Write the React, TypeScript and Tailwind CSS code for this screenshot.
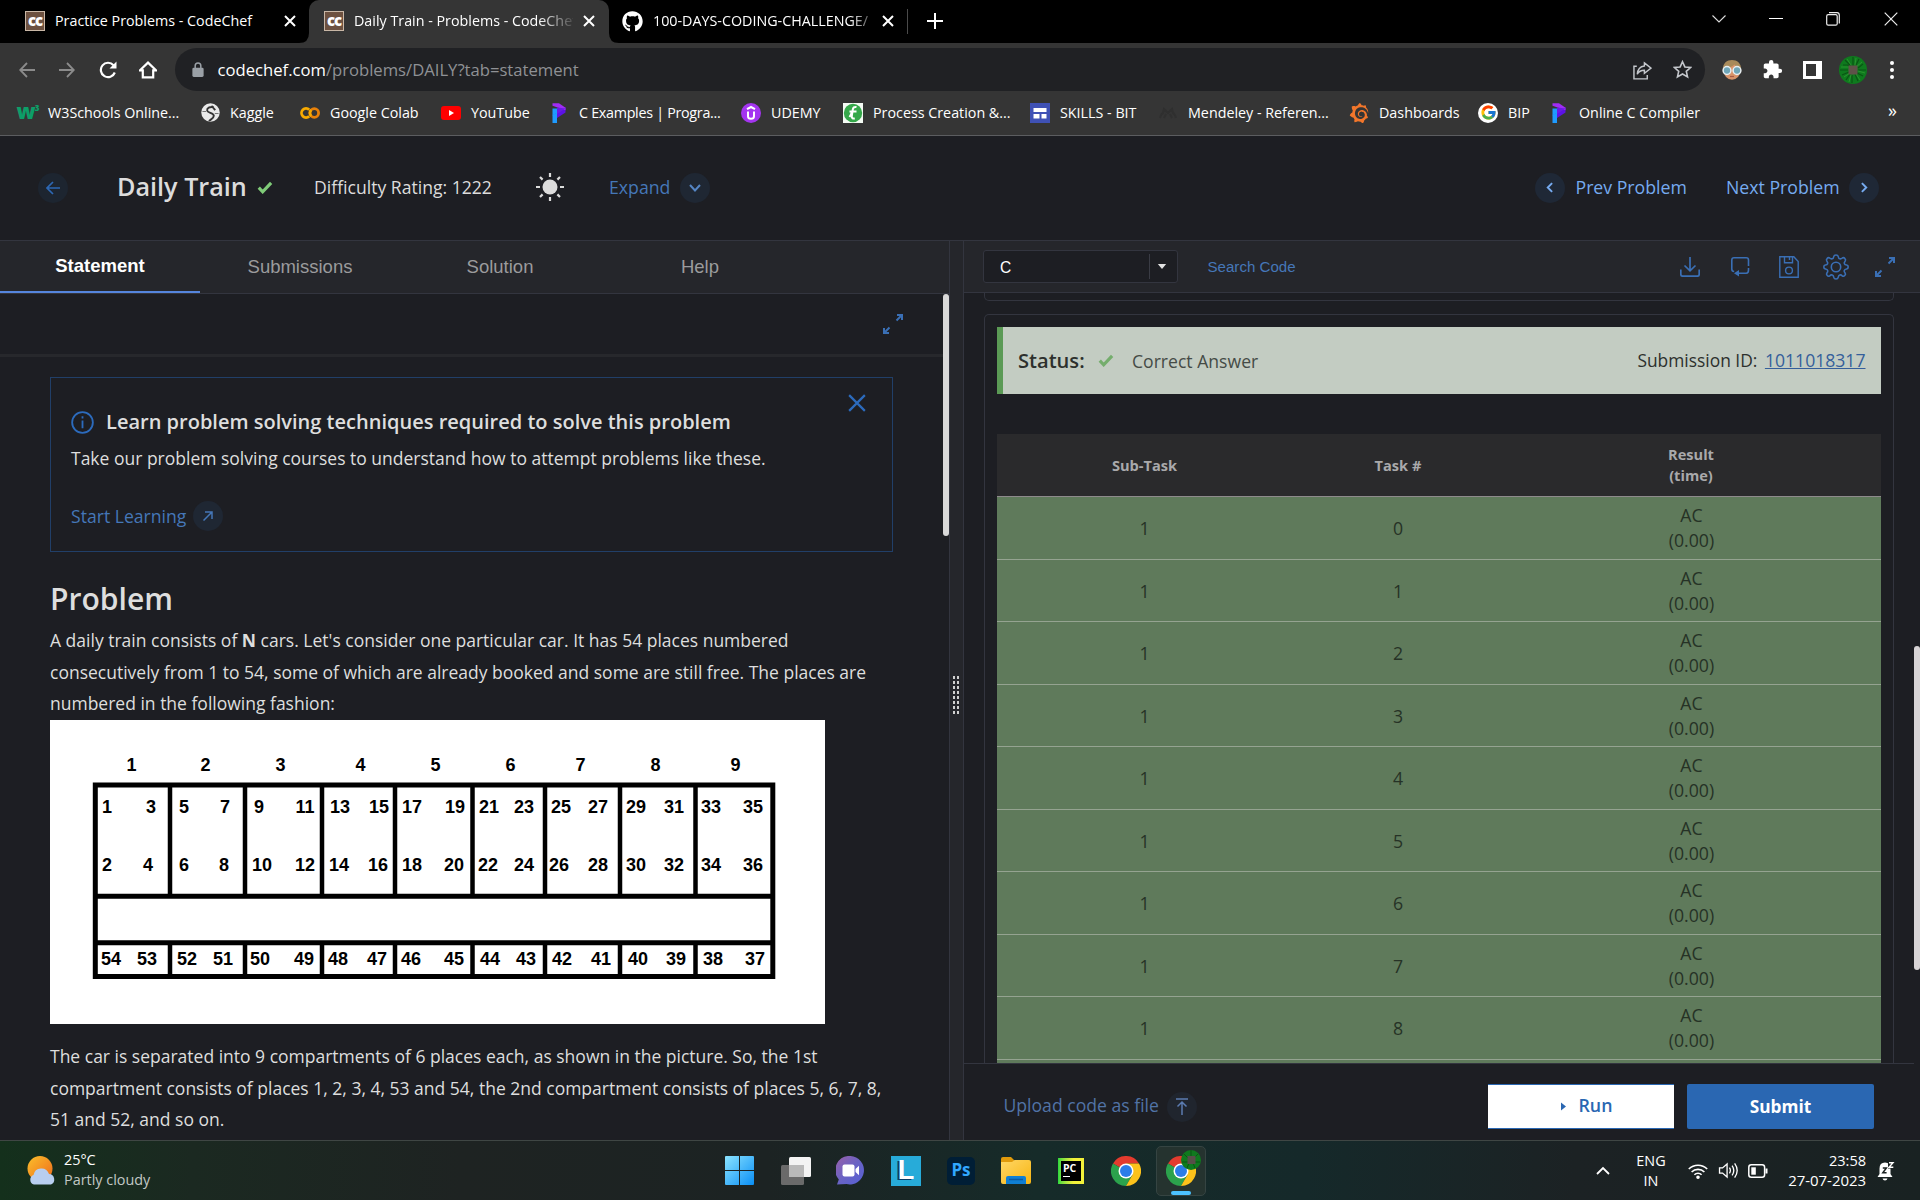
import type { ReactNode } from "react";
import { FaGithub } from "react-icons/fa";
import { FcGoogle } from "react-icons/fc";
import { MdExtension } from "react-icons/md";
import { SiGrafana } from "react-icons/si";

/* ---------- Shared glyphs ---------- */

function CloseX({ className = "size-[14px]" }: { className?: string }) {
  return (
    <svg viewBox="0 0 14 14" className={className} fill="none" stroke="currentColor" strokeWidth="2">
      <path d="M2 2l10 10M12 2L2 12" />
    </svg>
  );
}

function CodeChefIcon() {
  return (
    <div className="flex size-[20px] shrink-0 items-center justify-center border border-[#c9b7a6] bg-[#6d5140]">
      <span className="-mt-[2px] font-['Open_Sans',sans-serif] text-[15px] leading-none font-extrabold tracking-[-1px] text-white">cc</span>
    </div>
  );
}

function Check({ className }: { className: string }) {
  return (
    <svg viewBox="0 0 16 14" className={className} fill="none" stroke="currentColor" strokeWidth="3.4">
      <path d="M1.3 7.2l4.2 4.4L14.6 2" />
    </svg>
  );
}

function ExpandArrows({ className }: { className: string }) {
  return (
    <svg viewBox="0 0 20 20" className={className} fill="none" stroke="currentColor" strokeWidth="2">
      <path d="M14 1h5v5M19 1l-5.500 5.500M6 19H1v-5M1 19l5.500-5.500" />
    </svg>
  );
}

function Round({ children, className = "bg-[#1f2836]" }: { children: ReactNode; className?: string }) {
  return <div className={`flex size-[30px] shrink-0 items-center justify-center rounded-full ${className}`}>{children}</div>;
}

/* ---------- Browser chrome ---------- */

function TabStrip() {
  return (
    <div className="flex h-[43px] items-stretch bg-black text-[14.3px] text-white">
      <div className="flex w-[309px] items-center pb-px pl-[25px]">
        <CodeChefIcon />
        <span className="ml-[10px] w-[228px] whitespace-nowrap">Practice Problems - CodeChef</span>
        <CloseX />
      </div>
      <div className="relative flex w-[300px] items-center rounded-t-[10px] bg-[#353535] pb-px pl-[15px]">
        <svg viewBox="0 0 10 10" className="absolute bottom-0 -left-[10px] size-[10px]">
          <path d="M10 0v10H0Q10 10 10 0" fill="#353535" />
        </svg>
        <svg viewBox="0 0 10 10" className="absolute -right-[10px] bottom-0 size-[10px]">
          <path d="M0 0v10h10Q0 10 0 0" fill="#353535" />
        </svg>
        <CodeChefIcon />
        <span className="ml-[10px] w-[219px] overflow-hidden [mask-image:linear-gradient(to_right,black_84%,transparent_102%)] whitespace-nowrap">
          Daily Train - Problems - CodeChef
        </span>
        <CloseX className="ml-[9px] size-[14px]" />
      </div>
      <div className="flex w-[298px] items-center pb-px pl-[13px]">
        <FaGithub className="size-[21px]" />
        <span className="ml-[10px] w-[218px] overflow-hidden [mask-image:linear-gradient(to_right,black_90%,transparent_104%)] whitespace-nowrap">
          100-DAYS-CODING-CHALLENGE/
        </span>
        <CloseX className="ml-[10px] size-[14px]" />
      </div>
      <div className="mt-[9px] h-[25px] w-px bg-[#4a4a4a]" />
      <svg viewBox="0 0 16 16" className="mt-[13px] ml-[19px] size-[16px]" stroke="white" strokeWidth="2">
        <path d="M8 0v16M0 8h16" />
      </svg>
      <div className="ml-auto flex items-center pr-[22px] pb-[6px]">
        <svg viewBox="0 0 14 8" className="mr-[43px] h-[8px] w-[14px]" fill="none" stroke="#ddd" strokeWidth="1.1">
          <path d="M.5.5L7 7l6.500-6.500" />
        </svg>
        <div className="mr-[43px] h-px w-[14px] bg-white" />
        <svg viewBox="0 0 14 14" className="mr-[44px] size-[14px]" fill="none" stroke="#eee" strokeWidth="1.2">
          <rect x=".7" y="2.700" width="10.500" height="10.500" rx="1.500" />
          <path d="M3 .7h8a2.400 2.400 0 0 1 2.300 2.300v8.500" />
        </svg>
        <svg viewBox="0 0 14 14" className="size-[14px]" fill="none" stroke="#eee" strokeWidth="1.2">
          <path d="M.7.7l12.600 12.600M13.300.7L.7 13.300" />
        </svg>
      </div>
    </div>
  );
}

function Toolbar() {
  return (
    <div className="flex h-[53px] items-center bg-[#353535] pl-[19px] text-white">
      <svg viewBox="0 0 16 16" className="size-[16px] text-[#8b8b8b]" fill="none" stroke="currentColor" strokeWidth="1.8">
        <path d="M16 8H1.500M8 1L1.200 8 8 15" />
      </svg>
      <svg viewBox="0 0 16 16" className="ml-[24px] size-[16px] text-[#8b8b8b]" fill="none" stroke="currentColor" strokeWidth="1.8">
        <path d="M0 8h14.500M8 1l6.800 7L8 15" />
      </svg>
      <svg viewBox="0 0 18 18" className="ml-[24px] size-[18px]" fill="none" stroke="currentColor" strokeWidth="2.200">
        <path d="M15.800 11.500A7.200 7.200 0 1 1 14.500 4.200" />
        <path d="M17.500.5v7h-7z" fill="currentColor" stroke="none" />
      </svg>
      <svg viewBox="0 0 18 18" className="ml-[22px] size-[18px]" fill="none" stroke="currentColor" strokeWidth="2.200">
        <path d="M1 9.300L9 1.600l8 7.700h-2.800V16.400H3.800V9.300z" />
      </svg>
      <div className="ml-[18px] flex h-[43px] w-[1530px] items-center rounded-full bg-[#202124] pl-[17px]">
        <svg viewBox="0 0 12 16" className="h-[15px] w-[12px]" fill="#9aa0a6">
          <rect x="0" y="6" width="12" height="10" rx="1.500" />
          <path d="M3 7V4a3 3 0 0 1 6 0v3" fill="none" stroke="#9aa0a6" strokeWidth="1.600" />
        </svg>
        <span className="ml-[13.500px] pt-[2px] text-[16.65px] whitespace-nowrap">
          codechef.com<span className="text-[#8f9195]">/problems/DAILY?tab=statement</span>
        </span>
        <svg viewBox="0 0 20 20" className="mt-px mr-[21px] ml-auto size-[19px] text-[#c4c7cc]" fill="none" stroke="currentColor" strokeWidth="1.500">
          <path d="M4 5.500H1v13.300h14v-4" />
          <path d="M12 2l7 5.500-7 5.500V9.800c-4 0-6 1.200-7.500 4.200.3-4.500 2.700-8.300 7.500-8.800z" />
        </svg>
        <svg viewBox="0 0 20 20" className="mr-[13px] size-[19px] text-[#c4c7cc]" fill="none" stroke="currentColor" strokeWidth="1.700">
          <path d="M10 1.800l2.500 5.500 6 .6-4.500 4 1.300 5.900L10 14.700l-5.300 3.100L6 11.900l-4.500-4 6-.6z" />
        </svg>
      </div>
      <svg viewBox="0 0 20 20" className="ml-[17px] size-[20px]">
        <ellipse cx="10" cy="10.500" rx="8.500" ry="9.300" fill="#d9946a" />
        <path d="M.8 9.500C.8 3 5 0 10 0s9.200 3 9.200 9.500C16 8 14 6.500 12.500 4.500 10 7 5 8.500.8 9.500z" fill="#a88a5a" />
        <circle cx="5" cy="10.500" r="3.900" fill="#6fa6b8" stroke="#e8eef0" strokeWidth="1.500" />
        <circle cx="15" cy="10.500" r="3.900" fill="#6fa6b8" stroke="#e8eef0" strokeWidth="1.500" />
        <path d="M8 16.500h4" stroke="#a85a45" strokeWidth="1.200" />
      </svg>
      <MdExtension className="ml-[20px] size-[21px]" />
      <div className="ml-[20px] flex h-[18px] w-[19px] justify-start border-[3px] border-r-[6px] border-white" />
      <svg viewBox="0 0 28 28" className="ml-[17px] size-[28px]">
        <circle cx="14" cy="14" r="14" fill="#0f7a1e" />
        <g fill="none" stroke="#0a5514" strokeWidth="1.200">
          <path d="M4 9h5l2 3M6 4l5 5v3M14 1v9M20 3l-3 6M24 8l-5 4M27 14h-8M24 20l-6-3M19 25l-3-7M13 27v-8M7 24l4-6M3 19l7-3M1 14h8" />
        </g>
        <g fill="none" stroke="#2d9a30" strokeWidth=".8">
          <path d="M8 3l4 6M17 2l-1 7M23 6l-6 5M26 17l-7-2M21 24l-4-6M10 26l2-7M5 21l6-4M2 11h8" />
        </g>
        <rect x="9.500" y="9.500" width="9" height="9" fill="#5f5249" />
      </svg>
      <div className="ml-[23px] flex flex-col gap-[3px]">
        <i className="size-[4px] rounded-full bg-white" />
        <i className="size-[4px] rounded-full bg-white" />
        <i className="size-[4px] rounded-full bg-white" />
      </div>
    </div>
  );
}

function Programiz() {
  return (
    <svg viewBox="0 0 20 20" className="size-[20px]">
      <path d="M3.500 12l4.500-2.500V20H3.500z" fill="#1f9bff" />
      <path d="M3.500 5.500H8V10l-4.500 2.500z" fill="#1f9bff" />
      <path d="M8 9L16.500 4v5.500L8 15z" fill="#5c12e6" />
      <path d="M3.500.3H10l6.500 4.500v2.500L3.500 2.800z" fill="#a02df5" />
      <path d="M8 4.500l8.500 1L8 11z" fill="#6a1be6" />
    </svg>
  );
}

const bookmarks: { label: string; width: string; icon: ReactNode; tight?: boolean }[] = [
  {
    label: "W3Schools Online...",
    width: "w-[182px]",
    icon: (
      <span className="flex w-[20px] items-start justify-center font-['Open_Sans',sans-serif] leading-none font-extrabold text-[#0d9e68]">
        <span className="-mt-[3px] text-[21px] tracking-[-1px]">w</span>
        <span className="text-[8px]">3</span>
      </span>
    ),
  },
  {
    label: "Kaggle",
    width: "w-[100px]",
    icon: (
      <svg viewBox="0 0 20 20" className="size-[19px]">
        <circle cx="10" cy="10" r="9.700" fill="#e9e9e9" />
        <path d="M13.500 4.500C9 3.500 6 5.500 6.500 8s7 2.500 7 5.500-4 4-5 5.500M11 3l4 4.500" fill="none" stroke="#333" strokeWidth="2" />
        <path d="M1.500 9h4M14.500 11h4" stroke="#777" strokeWidth="1.200" />
      </svg>
    ),
  },
  {
    label: "Google Colab",
    width: "w-[141px]",
    icon: (
      <svg viewBox="0 0 20 12" className="h-[12px] w-[20px]" fill="none" strokeWidth="2.800">
        <path d="M9.200 2.800a4.500 4.500 0 1 0 0 6.400" stroke="#f9ab00" />
        <circle cx="14.300" cy="6" r="4.300" stroke="#e8810a" />
        <path d="M11.200 9.100a4.400 4.400 0 0 1 0-6.200" stroke="#f9ab00" />
      </svg>
    ),
  },
  {
    label: "YouTube",
    width: "w-[108px]",
    icon: (
      <svg viewBox="0 0 20 14" className="h-[14px] w-[20px]">
        <rect width="20" height="14" rx="3" fill="#f00" />
        <path d="M8 4l5 3-5 3z" fill="#fff" />
      </svg>
    ),
  },
  { label: "C Examples | Progra...", width: "w-[192px]", icon: <Programiz />, tight: true },
  {
    label: "UDEMY",
    width: "w-[102px]",
    icon: (
      <svg viewBox="0 0 20 20" className="size-[20px]" fill="none" stroke="#fff" strokeWidth="2">
        <circle cx="10" cy="10" r="10" fill="#a435f0" stroke="none" />
        <path d="M6 6.200L10 4l4 2.200M7 8.500v4.700q0 2.500 3 2.500t3-2.500V8.500" />
      </svg>
    ),
  },
  {
    label: "Process Creation &...",
    width: "w-[187px]",
    icon: (
      <svg viewBox="0 0 20 20" className="size-[20px]">
        <rect width="20" height="20" fill="#f4fbf4" />
        <circle cx="10" cy="10" r="9.200" fill="#35a84a" />
        <path d="M13.500 4Q10.200 3.300 9.700 7l-.9 6q-.3 3 3 2.500M6.500 8.500h7M9 8.500Q8 12 6.500 14" fill="none" stroke="#fff" strokeWidth="2" />
      </svg>
    ),
  },
  {
    label: "SKILLS - BIT",
    width: "w-[128px]",
    icon: (
      <svg viewBox="0 0 20 20" className="size-[20px]">
        <rect width="20" height="20" fill="#3f51b5" />
        <path d="M3.500 5h13v4h-13zM3.500 11h6v4.500h-6zM11.500 11h5v4.500h-5z" fill="#fff" />
      </svg>
    ),
  },
  {
    label: "Mendeley - Referen...",
    width: "w-[191px]",
    icon: (
      <svg viewBox="0 0 20 12" className="h-[12px] w-[20px]" fill="none" stroke="#2f2f2f" strokeWidth="2">
        <path d="M2 11q1-4 3-5l1-4 4 4 4-4 1 4q2 1 3 5M6 11l2-4M14 11l-2-4" />
      </svg>
    ),
  },
  { label: "Dashboards", width: "w-[129px]", icon: <SiGrafana className="size-[20px] text-[#f2762b]" /> },
  {
    label: "BIP",
    width: "w-[71px]",
    icon: (
      <span className="flex size-[20px] items-center justify-center rounded-full bg-white">
        <FcGoogle className="size-[17px]" />
      </span>
    ),
  },
  { label: "Online C Compiler", width: "w-[160px]", icon: <Programiz /> },
];

function Bookmarks() {
  return (
    <div className="flex h-[40px] items-center border-b border-[#5c5d60] bg-[#353535] pb-[6px] pl-[18px] text-[14.3px] text-white">
      {bookmarks.map((b) => (
        <div key={b.label} className={`flex shrink-0 items-center ${b.width}`}>
          <span className="flex w-[20px] items-center justify-center">{b.icon}</span>
          <span className={b.tight ? "ml-[10px] tracking-[-0.28px] whitespace-nowrap" : "ml-[10px] whitespace-nowrap"}>
            {b.label}
          </span>
        </div>
      ))}
      <span className="mr-[23px] ml-auto -mt-[4px] text-[18px]">»</span>
    </div>
  );
}

/* ---------- Page header ---------- */

function Header() {
  return (
    <div className="flex h-[105px] items-center border-b border-[#33353f] pt-[1px] pb-[2px] text-[17.5px] text-[#dcdcdc]">
      <Round className="ml-[38px] bg-[#1d2530] text-[#2d68b4]">
        <svg viewBox="0 0 14 14" className="size-[14px]" fill="none" stroke="currentColor" strokeWidth="1.700">
          <path d="M14 7H1M7 1L1 7l6 6" />
        </svg>
      </Round>
      <h1 className="-mt-[2px] ml-[49px] w-[140px] text-[25.2px] font-semibold whitespace-nowrap">Daily Train</h1>
      <Check className="h-[13px] w-[16px] text-[#7fcb78]" />
      <span className="ml-[41px] w-[222px] text-[17.6px] whitespace-nowrap">Difficulty Rating: 1222</span>
      <svg viewBox="0 0 28 28" className="-mt-[2px] size-[28px]" fill="#dcdcdc" stroke="#dcdcdc" strokeWidth="2.200">
        <circle cx="14" cy="14" r="7.500" stroke="none" />
        <path d="M14 0v4M14 24v4M0 14h4M24 14h4M4 4l2.600 2.600M21.400 21.400L24 24M4 24l2.600-2.600M21.400 6.600L24 4" />
      </svg>
      <span className="ml-[45px] w-[71px] text-[17.700px] text-[#4577b8]">Expand</span>
      <Round className="bg-[#1f2733] text-[#5585c4]">
        <svg viewBox="0 0 12 8" className="h-[8px] w-[12px]" fill="none" stroke="currentColor" strokeWidth="2">
          <path d="M1 1l5 5.500L11 1" />
        </svg>
      </Round>
      <div className="ml-auto flex items-center pr-[41px] text-[17.700px] text-[#76abf0]">
        <Round>
          <svg viewBox="0 0 8 12" className="mr-[2px] h-[11px] w-[7px]" fill="none" stroke="currentColor" strokeWidth="2.200">
            <path d="M7 1L2 6l5 5" />
          </svg>
        </Round>
        <span className="ml-[10.500px] w-[150.500px]">Prev Problem</span>
        <span className="w-[123px]">Next Problem</span>
        <Round>
          <svg viewBox="0 0 8 12" className="h-[11px] w-[7px]" fill="none" stroke="currentColor" strokeWidth="2.200">
            <path d="M1 1l5 5-5 5" />
          </svg>
        </Round>
      </div>
    </div>
  );
}

/* ---------- Train car drawing ---------- */

const carLabels: [string, number][] = [
  ["1", 81.5], ["2", 155.5], ["3", 230.5], ["4", 310.5], ["5", 385.5], ["6", 460.5], ["7", 530.5], ["8", 605.5], ["9", 685.5],
];
const oddSeats: [string, number][] = [
  ["1", 57], ["3", 101], ["5", 134], ["7", 175], ["9", 209], ["11", 255], ["13", 290], ["15", 329], ["17", 362],
  ["19", 405], ["21", 439], ["23", 474], ["25", 511], ["27", 548], ["29", 586], ["31", 624], ["33", 661], ["35", 703],
];
const evenSeats: [string, number][] = [
  ["2", 57], ["4", 98], ["6", 134], ["8", 174], ["10", 212], ["12", 255], ["14", 289], ["16", 328], ["18", 362],
  ["20", 404], ["22", 438], ["24", 474], ["26", 509], ["28", 548], ["30", 586], ["32", 624], ["34", 661], ["36", 703],
];
const sideSeats: [string, number][] = [
  ["54", 61], ["53", 97], ["52", 137], ["51", 173], ["50", 210], ["49", 254], ["48", 288], ["47", 327], ["46", 361],
  ["45", 404], ["44", 440], ["43", 476], ["42", 512], ["41", 551], ["40", 588], ["39", 626], ["38", 663], ["37", 705],
];
const walls = [120, 195, 272, 345, 422.5, 495, 570, 645.5];

function SeatRow({ seats, y }: { seats: [string, number][]; y: number }) {
  return (
    <>
      {seats.map(([n, x]) => (
        <text key={n} x={x} y={y}>
          {n}
        </text>
      ))}
    </>
  );
}

function TrainCar() {
  return (
    <svg viewBox="0 0 775 304" className="h-[304px] w-[775px] bg-white">
      <g fill="none" stroke="#000" strokeWidth="5">
        <rect x="45.300" y="65" width="677.500" height="191.500" />
        <path d="M43 176.200h682M43 222.700h682" />
        {walls.map((x) => (
          <path key={x} d={`M${x} 65V176M${x} 223V256`} strokeWidth="4.500" />
        ))}
      </g>
      <g fontFamily="Liberation Sans, sans-serif" fontWeight="700" fontSize="18" textAnchor="middle" fill="#000">
        <SeatRow seats={carLabels} y={51} />
        <SeatRow seats={oddSeats} y={93} />
        <SeatRow seats={evenSeats} y={151} />
        <SeatRow seats={sideSeats} y={245} />
      </g>
    </svg>
  );
}

/* ---------- Left pane ---------- */

function LeftPane() {
  const tabs = ["Statement", "Submissions", "Solution", "Help"];
  return (
    <div className="flex w-[950px] flex-col border-r border-[#33353f]">
      <div className="flex h-[53px] shrink-0 border-b border-[#33353f] bg-[#25262b] font-['Liberation_Sans',sans-serif] text-[18.500px]">
        {tabs.map((t, i) => (
          <div
            key={t}
            className={
              i === 0
                ? "flex w-[200px] items-center justify-center border-b-2 border-[#5585dd] font-bold text-white"
                : "flex w-[200px] items-center justify-center text-[#9b9b9d]"
            }
          >
            {t}
          </div>
        ))}
      </div>
      <div className="flex min-h-0 flex-1">
        <div className="flex w-[943px] flex-col overflow-hidden">
          <div className="flex h-[63px] shrink-0 items-center justify-end border-b-[3px] border-[#27282c] pr-[40px] text-[#3a6fb5]">
            <ExpandArrows className="size-[20px]" />
          </div>
          <div className="mt-[20px] ml-[50px] flex h-[175px] w-[843px] shrink-0 flex-col border border-[#213f68] pl-[20px] text-[#dedede]">
            <div className="flex">
              <div className="mt-[32px] flex items-center">
                <svg viewBox="0 0 24 24" className="size-[23px]" fill="none" stroke="#2c6bbd" strokeWidth="1.900">
                  <circle cx="12" cy="12" r="10.800" />
                  <path d="M12 10v8M12 5.500v2.200" />
                </svg>
                <span className="ml-[12px] text-[20.030px] leading-[24px] font-semibold whitespace-nowrap">
                  Learn problem solving techniques required to solve this problem
                </span>
              </div>
              <CloseX className="mt-[14px] mr-[24px] ml-auto size-[22px] text-[#2c6bbd] [stroke-width:1.4]" />
            </div>
            <p className="mt-[10px] text-[17.500px] leading-[28px]">
              Take our problem solving courses to understand how to attempt problems like these.
            </p>
            <div className="mt-[29px] flex items-center text-[17.600px] text-[#4577b8]">
              <span className="w-[122px]">Start Learning</span>
              <Round className="bg-[#1f2733]">
                <svg viewBox="0 0 10 10" className="size-[10px]" fill="none" stroke="currentColor" strokeWidth="1.500">
                  <path d="M.5 9.500L9 1M2 1h7v7" />
                </svg>
              </Round>
            </div>
          </div>
          <div className="ml-[50px] w-[850px] text-[17.500px] leading-[31.500px] text-[#dedede]">
            <h2 className="mt-[27px] text-[30.100px] leading-[40px] font-semibold">Problem</h2>
            <p className="mt-[6px] whitespace-nowrap">
              A daily train consists of <b>N</b> cars. Let's consider one particular car. It has 54 places numbered
              <br />
              consecutively from 1 to 54, some of which are already booked and some are still free. The places are
              <br />
              numbered in the following fashion:
            </p>
            <TrainCar />
            <p className="mt-[17.500px] whitespace-nowrap">
              The car is separated into 9 compartments of 6 places each, as shown in the picture. So, the 1st
              <br />
              compartment consists of places 1, 2, 3, 4, 53 and 54, the 2nd compartment consists of places 5, 6, 7, 8,
              <br />
              51 and 52, and so on.
            </p>
          </div>
        </div>
        <div className="h-[242px] w-[6px] rounded-full bg-[#d9d9d9]" />
      </div>
    </div>
  );
}

function Splitter() {
  return (
    <div className="w-[13px] bg-[#25262b] pt-[435px] pl-[3px]">
      <div className="grid w-[6px] grid-cols-2 gap-x-[2px] gap-y-[2px]">
        {Array.from({ length: 16 }, (_, i) => (
          <i key={i} className="h-[3px] w-[2px] bg-[#d0d0d0]" />
        ))}
      </div>
    </div>
  );
}

/* ---------- Right pane ---------- */

function EditorBar() {
  return (
    <div className="flex h-[52px] shrink-0 items-center border-b border-[#33353f] bg-[#25262b] pl-[19px] font-['Liberation_Sans',sans-serif] text-[15.200px]">
      <div className="flex h-[33px] w-[195px] items-center rounded-[3px] border border-[#33353f] bg-[#1d1e23] pl-[16px] text-[15.600px] text-white">
        <span className="w-[149px] pt-[2px]">C</span>
        <i className="h-[25px] w-px bg-[#3a3c45]" />
        <svg viewBox="0 0 10 6" className="ml-[7px] h-[5px] w-[10px]" fill="#e2e2e2">
          <path d="M0 0h10L5 6z" />
        </svg>
      </div>
      <span className="ml-[29.500px] pt-[2px] text-[15.100px] text-[#4577b8]">Search Code</span>
      <div className="ml-auto flex items-center text-[#3a6fb5]">
        <svg viewBox="0 0 20 20" className="mr-[30px] size-[20px]" fill="none" stroke="currentColor" strokeWidth="1.700">
          <path d="M10 0v13.500M4.500 8.500L10 13.800l5.500-5.300M.8 12.500v4.700q0 2 2 2h14.400q2 0 2-2v-4.700" />
        </svg>
        <svg viewBox="0 0 20 20" className="mr-[29px] size-[20px]" fill="none" stroke="currentColor" strokeWidth="1.600">
          <path d="M18.500 9V3q0-2.200-2.200-2.200H4Q1.800.8 1.800 3v9q0 2.500 2.400 2.500M18.500 11v2q0 3.200-2.200 3.200H6" />
          <path d="M9 13v6.500L4 16.200z" fill="currentColor" stroke="none" />
        </svg>
        <svg viewBox="0 0 20 22" className="mr-[24px] h-[22px] w-[20px]" fill="none" stroke="currentColor" strokeWidth="1.400">
          <path d="M.8.8h14l4.400 4.700v15.700H.8zM5.500 1v5.700h8V1M10.500 1v3" />
          <circle cx="10" cy="14.500" r="3.400" />
        </svg>
        <svg viewBox="0 0 26 26" className="mr-[26px] size-[26px]" fill="none" stroke="currentColor" strokeWidth="1.600">
          <circle cx="13" cy="13" r="4.700" />
          <path d="M10.800 2.500q.2-1.500 2.200-1.500t2.200 1.500q.3 2 1.600 2.300 1.200.4 2.600-.8 1.300-.9 2.500.6 1.200 1.300.2 2.600-1.200 1.400-.7 2.600.4 1 2.200 1.200 1.600.2 1.600 2t-1.600 2q-1.900.3-2.300 1.400-.5 1.200.8 2.600 1 1.200-.3 2.500t-2.500.3q-1.400-1.300-2.600-.8-1.100.4-1.500 2.400-.3 1.600-2.200 1.600t-2.200-1.600q-.3-2-1.500-2.400-1.200-.5-2.600.8-1.300 1-2.500-.3t-.3-2.500q1.200-1.400.8-2.600-.4-1.100-2.300-1.400-1.600-.2-1.600-2t1.600-2q1.800-.2 2.200-1.200.5-1.200-.7-2.600-1-1.300.2-2.600 1.200-1.500 2.500-.6Q8 5.200 9.200 4.800q1.300-.3 1.600-2.300z" />
        </svg>
        <ExpandArrows className="mr-[25px] size-[20px]" />
      </div>
    </div>
  );
}

function Results() {
  return (
    <div className="flex min-h-0 flex-1 flex-col overflow-hidden pl-[20px]">
      <div className="h-[8px] w-[910px] shrink-0 rounded-b-[5px] border border-t-0 border-[#33353f]" />
      <div className="mt-[13px] w-[910px] shrink-0 rounded-t-[5px] border border-b-0 border-[#33353f] px-[12px] pt-[12px]">
        <div className="flex h-[67px] w-[884px] items-center border-l-[6px] border-[#5b9a55] bg-[#c3ccc2] pl-[15px] text-[17.600px] text-[#454b46]">
          <span className="w-[80px] pt-px text-[20.100px] font-semibold text-[#2d302d]">Status:</span>
          <Check className="h-[13px] w-[16px] text-[#74ad6c]" />
          <span className="ml-[18px] pt-[2px]">Correct Answer</span>
          <span className="mr-[7.500px] ml-auto text-[17.400px] text-[#2d302d]">Submission ID:</span>
          <span className="mr-[15.500px] text-[17.600px] text-[#355f9b] underline">1011018317</span>
        </div>
        <table className="mt-[40px] w-[884px] table-fixed border-collapse text-center text-[17.700px] leading-[25px] text-[#263226]">
          <colgroup>
            <col className="w-[295px]" />
            <col className="w-[212px]" />
            <col className="w-[377px]" />
          </colgroup>
          <thead>
            <tr className="h-[62.500px] border-b border-[#8e8a8c] bg-[#2a2a2c] text-[14.600px] leading-[21.500px] text-[#a9a9ab]">
              <th className="pt-px">Sub-Task</th>
              <th className="pt-px">Task #</th>
              <th className="pr-[3px]">
                Result
                <br />
                (time)
              </th>
            </tr>
          </thead>
          <tbody>
            {Array.from({ length: 10 }, (_, i) => (
              <tr key={i} className="h-[62.500px] border-b border-[#95a391] bg-[#5f7a5b]">
                <td className="pt-[1.500px]">{i < 9 ? "1" : ""}</td>
                <td className="pt-[1.500px]">{i < 9 ? i : ""}</td>
                <td className="pt-px pr-[2px]">
                  {i < 9 && (
                    <>
                      AC
                      <br />
                      (0.00)
                    </>
                  )}
                </td>
              </tr>
            ))}
          </tbody>
        </table>
      </div>
    </div>
  );
}

function SubmitBar() {
  return (
    <div className="flex h-[77px] shrink-0 items-center border-t border-[#33353f] pt-[9px] pl-[39.500px]">
      <span className="w-[163.500px] pb-[2px] text-[17.600px] text-[#5173a6]">Upload code as file</span>
      <Round className="bg-[#20252e] text-[#5b7bb0]">
        <svg viewBox="0 0 12 17" className="h-[17px] w-[12px]" fill="none" stroke="currentColor" strokeWidth="1.500">
          <path d="M0 1h12M6 17V4M1.500 8.500L6 4l4.500 4.500" />
        </svg>
      </Round>
      <div className="mr-[13.500px] ml-auto flex h-[45px] w-[186px] items-center justify-center gap-[13px] border-y border-[#2a67b2] bg-white pl-[12px] text-[17.800px] font-semibold text-[#2a67b2]">
        <svg viewBox="0 0 5 8" className="h-[9px] w-[5px]" fill="currentColor">
          <path d="M0 0l5 4-5 4z" />
        </svg>
        <span className="pb-[2px]">Run</span>
      </div>
      <div className="mr-[40px] flex h-[45px] w-[187px] items-center justify-center rounded-[2px] bg-[#2a67b2] text-[17.300px] font-bold text-white">
        Submit
      </div>
    </div>
  );
}

/* ---------- Taskbar ---------- */

function ChromeLogo() {
  return (
    <svg viewBox="0 0 30 30" className="size-[30px]">
      <path d="M15 15L2 7.500A15 15 0 0 1 28 7.500H15z" fill="#e33b2e" />
      <path d="M15 15L2 7.500a15 15 0 0 0 13 22.500l6.500-11.200z" fill="#2ba24c" />
      <path d="M15 7.500h13A15 15 0 0 1 15 30l6.500-11.200z" fill="#fcc21b" />
      <circle cx="15" cy="15" r="7.500" fill="#fff" />
      <circle cx="15" cy="15" r="6" fill="#2b7de9" />
    </svg>
  );
}

function TaskbarApps() {
  return (
    <div className="flex items-center">
      <svg viewBox="0 0 29 29" className="size-[29px]">
        <defs>
          <linearGradient id="win" x1="0" y1="0" x2="1" y2="1">
            <stop offset="0" stopColor="#8be3ff" />
            <stop offset="1" stopColor="#0a8ff5" />
          </linearGradient>
        </defs>
        <path d="M0 1q0-1 1-1h13v14H0zM15 0h13q1 0 1 1v13H15zM0 15h14v14H1q-1 0-1-1zM15 15h14v13q0 1-1 1H15z" fill="url(#win)" />
      </svg>
      <svg viewBox="0 0 30 28" className="ml-[27px] h-[28px] w-[30px]">
        <rect x="0" y="8" width="23" height="20" rx="1.500" fill="#6a6a6a" />
        <rect x="8" y="0" width="22" height="20" rx="1.500" fill="#f3f3f3" />
        <rect x="8" y="8" width="15" height="12" fill="#b9b9b9" />
      </svg>
      <svg viewBox="0 0 29 29" className="ml-[25px] size-[29px]">
        <defs>
          <linearGradient id="chat" x1="0" y1="0" x2="1" y2="1">
            <stop offset="0" stopColor="#9a5fa8" />
            <stop offset=".5" stopColor="#6a63c4" />
            <stop offset="1" stopColor="#5560d6" />
          </linearGradient>
        </defs>
        <path d="M14.500 0a14.200 14.200 0 1 1-4 28L1 28.500l1.800-5A14.200 14.200 0 0 1 14.500 0z" fill="url(#chat)" />
        <rect x="6.500" y="8.500" width="12" height="12" rx="2" fill="#fff" />
        <path d="M19.500 13l3.500-3.200v9.400L19.500 16z" fill="#fff" />
      </svg>
      <div className="ml-[26px] flex size-[30px] items-center justify-center bg-[#27abd9] pb-px">
        <span className="font-['Liberation_Sans',sans-serif] text-[27px] leading-none font-bold text-white [text-shadow:-2px_1px_0_#0b3c66]">L</span>
      </div>
      <div className="ml-[26px] flex size-[28px] items-center justify-center rounded-[5px] bg-[#001e36] pb-[2px] text-[17px] leading-none font-bold text-[#31a8ff]">
        Ps
      </div>
      <svg viewBox="0 0 30 28" className="ml-[26px] h-[28px] w-[30px]">
        <defs>
          <linearGradient id="folder" x1="0" y1="0" x2="1" y2="1">
            <stop offset="0" stopColor="#ffd766" />
            <stop offset="1" stopColor="#f7b512" />
          </linearGradient>
        </defs>
        <path d="M0 2q0-2 2-2h8l3 3v4H0z" fill="#e09a0b" />
        <path d="M0 5h11l2.500-2H28q2 0 2 2v20q0 2-2 2H2q-2 0-2-2z" fill="url(#folder)" />
        <path d="M5 27v-6q0-2 2-2h16q2 0 2 2v6z" fill="#0f7fd4" />
        <path d="M8 22.500h14" stroke="#0a5aa3" strokeWidth="1.500" />
      </svg>
      <div className="ml-[27px] flex size-[26px] flex-col bg-gradient-to-r from-[#22d83f] to-[#f2f13a] to-60% p-[3px]">
        <div className="flex flex-1 flex-col bg-black pt-[2px] pl-[2px]">
          <span className="text-[10.500px] leading-[11px] font-bold text-white">PC</span>
          <i className="mt-[2px] h-px w-[7px] bg-white" />
        </div>
      </div>
      <div className="ml-[27px]">
        <ChromeLogo />
      </div>
      <div className="relative ml-[15px] flex h-[50px] w-[50px] items-center justify-center rounded-[5px] border border-[#354442] bg-[#25332f]">
        <ChromeLogo />
        <svg viewBox="0 0 20 20" className="absolute top-[3px] right-[4px] size-[20px]">
          <circle cx="10" cy="10" r="10" fill="#0f7a1e" />
          <path d="M10 0v7M3 4l4 4M17 4l-4 4M1 12h6M19 12h-6M6 18l2-5M14 18l-2-5" stroke="#0a5514" />
          <rect x="6.500" y="6" width="8" height="8" fill="#574f48" />
        </svg>
        <div className="absolute bottom-0 left-[14px] h-[4px] w-[20px] rounded-full bg-[#4cc2ff]" />
      </div>
    </div>
  );
}

function Taskbar() {
  return (
    <div className="flex h-[60px] items-center border-t border-[#3f4644] bg-[linear-gradient(90deg,#14301c_0%,#1b2921_10%,#1e2322_24%,#1c2323_40%,#162b29_54%,#15292a_68%,#1c2224_82%,#192222_100%)] text-[14.400px] text-white">
      <svg viewBox="0 0 29 29" className="ml-[27px] size-[29px]">
        <defs>
          <linearGradient id="sun" x1="0" y1="0" x2="1" y2="1">
            <stop offset="0" stopColor="#fbbf2b" />
            <stop offset="1" stopColor="#ee6a1c" />
          </linearGradient>
        </defs>
        <circle cx="13" cy="12.500" r="12.500" fill="url(#sun)" />
        <path d="M7 28.500a5 5 0 0 1-.5-9.500 8 8 0 0 1 15.500-1 5.500 5.500 0 0 1 2 10.500z" fill="#b8cef0" />
      </svg>
      <div className="ml-[8px] w-[661px] pb-px leading-[20.500px]">
        <div>25°C</div>
        <div className="text-[#c2c8c5]">Partly cloudy</div>
      </div>
      <TaskbarApps />
      <svg viewBox="0 0 14 8" className="ml-[390px] h-[9px] w-[14px]" fill="none" stroke="#fff" strokeWidth="1.800">
        <path d="M1 7.500l6-6 6 6" />
      </svg>
      <div className="ml-[21px] w-[40px] text-center leading-[20px]">
        <div>ENG</div>
        <div>IN</div>
      </div>
      <svg viewBox="0 0 20 16" className="ml-[17px] h-[16px] w-[20px]" fill="none" stroke="#fff" strokeWidth="1.600">
        <path d="M.8 6a13 13 0 0 1 18.400 0M3.600 9a9 9 0 0 1 12.800 0M6.400 11.800a5 5 0 0 1 7.200 0" />
        <circle cx="10" cy="14.200" r="1" fill="#fff" />
      </svg>
      <svg viewBox="0 0 21 18" className="ml-[10px] h-[17px] w-[21px]" fill="none" stroke="#fff" strokeWidth="1.400">
        <path d="M1 6.300h3.200L9 2v14l-4.800-4.300H1zM11.500 6q2 3 0 6M14.300 3.800q3.600 5.200 0 10.400M17 1.500q5.400 7.500 0 15" />
      </svg>
      <svg viewBox="0 0 20 14" className="ml-[9px] h-[14px] w-[20px]" fill="none" stroke="#fff" strokeWidth="1.500">
        <rect x=".8" y=".8" width="15.800" height="12.400" rx="2.500" />
        <rect x="3.300" y="3.300" width="4.500" height="7.400" fill="#fff" stroke="none" />
        <path d="M18.500 4.500v5" strokeWidth="2" />
      </svg>
      <div className="ml-[14px] w-[84px] pb-px text-right text-[15px] leading-[20.500px] tracking-[-0.05px]">
        <div className="text-[14.600px]">23:58</div>
        <div>27-07-2023</div>
      </div>
      <svg viewBox="0 0 18 20" className="ml-[11px] h-[20px] w-[18px]">
        <path d="M8 1.500q5.500 0 5.500 6V13l2 3H.5l2-3V7.500q0-6 5.500-6z" fill="#fff" />
        <path d="M5.500 17.500h5q-.5 2-2.500 2t-2.500-2z" fill="#fff" />
        <path d="M5.800 7h3.600l-3.600 4.800h3.800" fill="none" stroke="#1b2222" strokeWidth="1.500" />
        <path d="M11 .5h6.500v7H11z" fill="#1b2222" />
        <path d="M12 1.700h4L12 6.300h4.300" fill="none" stroke="#fff" strokeWidth="1.400" />
      </svg>
    </div>
  );
}

export default function App() {
  return (
    <div className="flex h-[1200px] w-[1920px] flex-col overflow-hidden bg-[#1d1e23] font-['Open_Sans','Noto_Sans',sans-serif]">
      <TabStrip />
      <Toolbar />
      <Bookmarks />
      <Header />
      <div className="flex h-[899px]">
        <LeftPane />
        <Splitter />
        <div className="flex flex-1 flex-col border-l border-[#33353f]">
          <EditorBar />
          <div className="flex min-h-0 flex-1">
            <div className="flex w-[950px] flex-col">
              <Results />
              <SubmitBar />
            </div>
            <div className="mt-[353px] h-[324px] w-[6px] rounded-full bg-[#d8d4d6]" />
          </div>
        </div>
      </div>
      <Taskbar />
    </div>
  );
}
